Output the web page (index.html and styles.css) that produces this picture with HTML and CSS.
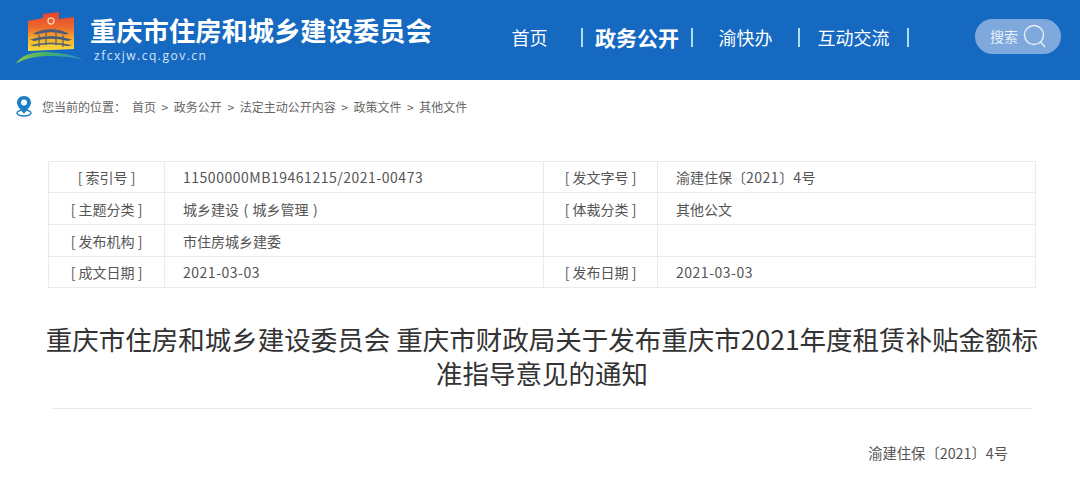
FILE: index.html
```html
<!DOCTYPE html>
<html lang="zh-CN">
<head>
  <meta charset="UTF-8">
  <meta name="viewport" content="width=device-width, initial-scale=1.0">
  <title>重庆市住房和城乡建设委员会</title>
  <link rel="stylesheet" href="styles.css">
</head>
<body>
  <!-- Header -->
  <header class="site-header">
    <svg class="logo" width="70" height="56" viewBox="16 9 70 56" aria-hidden="true">
      <defs>
        <linearGradient id="flag" x1="0" y1="0" x2="0" y2="1">
          <stop offset="0" stop-color="#e2442f"/>
          <stop offset="0.4" stop-color="#ee6a2c"/>
          <stop offset="0.72" stop-color="#f5b52e"/>
          <stop offset="1" stop-color="#f9dc3e"/>
        </linearGradient>
        <linearGradient id="swoosh" x1="0" y1="0" x2="1" y2="0">
          <stop offset="0" stop-color="#8ac743"/>
          <stop offset="0.45" stop-color="#45b06a"/>
          <stop offset="1" stop-color="#2f86cf"/>
        </linearGradient>
      </defs>
      <path d="M28 20 L43 17 L43 13 L59 11 L59 18 L74 16 L74 48 L28 50 Z" fill="url(#flag)"/>
      <circle cx="51" cy="20" r="3" fill="none" stroke="#f6c9a8" stroke-width="1.5"/>
      <path d="M33 32.500 Q51 24 69 32.500 L65 33.500 Q51 28.500 37 33.500 Z" fill="#4a5a78"/>
      <path d="M30 38.500 Q51 31.500 72 38.500 L68 40 Q51 35.500 34 40 Z" fill="#4a5a78"/>
      <path d="M30 44 Q51 39 72 44 L68 45.200 Q51 41.500 34 45.200 Z" fill="#5a6470"/>
      <path d="M39 34 V46 M46 31 V44 M56 31 V44 M63 34 V46" stroke="#55606f" stroke-width="1.200" fill="none"/>
      <path d="M16 62.500 Q24 50 48 51 Q70 52 84 59 Q66 54.500 46 55 Q28 55.500 16 62.500 Z" fill="url(#swoosh)"/>
    </svg>
    <div class="site-name">
      <div class="site-title">重庆市住房和城乡建设委员会</div>
      <div class="site-url">zfcxjw.cq.gov.cn</div>
    </div>
    <nav class="main-nav">
      <a class="nav-item nav-first"><span>首页</span></a>
      <a class="nav-item nav-active"><span>政务公开</span></a>
      <a class="nav-item nav-mid"><span>渝快办</span></a>
      <a class="nav-item nav-last"><span>互动交流</span></a>
    </nav>
    <div class="search-box">
      <span>搜索</span>
      <svg width="24" height="24" viewBox="0 0 24 24" fill="none" stroke="#e6f0fa" stroke-width="1.4" aria-hidden="true">
        <circle cx="11" cy="11" r="9.500"/>
        <path d="M17.500 18 L22 23"/>
      </svg>
    </div>
  </header>

  <!-- Breadcrumb -->
  <div class="breadcrumb">
    <svg width="18" height="22" viewBox="0 0 18 22" aria-hidden="true">
      <ellipse cx="9" cy="18" rx="7" ry="3" fill="none" stroke="#1e7fc4" stroke-width="1.500"/>
      <path d="M9 1 C4.500 1 2 4.300 2 7.600 C2 11.800 6.500 15.500 9 19 C11.500 15.500 16 11.800 16 7.600 C16 4.300 13.500 1 9 1 Z" fill="#1e7fc4"/>
      <circle cx="9" cy="7.500" r="3" fill="#fff"/>
    </svg>
    <span class="crumb-label">您当前的位置：</span>
    <span class="crumb-path">首页 &gt; 政务公开 &gt; 法定主动公开内容 &gt; 政策文件 &gt; 其他文件</span>
  </div>

  <!-- Document info -->
  <table class="info-table">
    <colgroup>
      <col class="col-label">
      <col class="col-value">
      <col class="col-label2">
      <col>
    </colgroup>
    <tr class="row-short">
      <th>[ 索引号 ]</th>
      <td><span class="num">11500000MB19461215/2021-00473</span></td>
      <th>[ 发文字号 ]</th>
      <td>渝建住保〔<span class="num">2021</span>〕<span class="num">4</span>号</td>
    </tr>
    <tr>
      <th>[ 主题分类 ]</th>
      <td class="wide-gaps">城乡建设 ( 城乡管理 )</td>
      <th>[ 体裁分类 ]</th>
      <td>其他公文</td>
    </tr>
    <tr>
      <th>[ 发布机构 ]</th>
      <td>市住房城乡建委</td>
      <th></th>
      <td></td>
    </tr>
    <tr class="row-short">
      <th>[ 成文日期 ]</th>
      <td><span class="num">2021-03-03</span></td>
      <th>[ 发布日期 ]</th>
      <td><span class="num">2021-03-03</span></td>
    </tr>
  </table>

  <!-- Article -->
  <h1 class="doc-title">重庆市住房和城乡建设委员会 重庆市财政局关于发布重庆市2021年度租赁补贴金额标准指导意见的通知</h1>
  <p class="doc-number">渝建住保〔2021〕4号</p>
</body>
</html>
```

FILE: styles.css
```css
body {
  font-family: "Noto Sans CJK SC", "Noto Sans", sans-serif;
  margin: 0;
  padding: 0;
  background-color: #fff;
  color: #555;
  overflow: hidden;
}
.site-header {
  height: 80px;
  background-color: #1569c1;
  display: flex;
  align-items: center;
  color: #fff;
}
.logo {
  margin: 0 4px 4px 16px;
  flex: none;
}
.site-name {
  width: 388px;
  margin-bottom: 2px;
}
.site-title {
  font-size: 26.3px;
  font-weight: 700;
  line-height: 30px;
}
.site-url {
  font-family: "Open Sans", sans-serif;
  font-size: 12px;
  line-height: 16px;
  letter-spacing: 1.5px;
  margin: 3px 0 0 4px;
  color: #d5e5f6;
}
.main-nav {
  display: flex;
  align-items: center;
  margin-bottom: 6px;
}
.nav-item {
  display: flex;
  align-items: center;
  justify-content: center;
  height: 19px;
  border-right: 2px solid #a8e0f0;
  font-size: 18px;
  box-sizing: border-box;
}
.nav-first { width: 105px; }
.nav-active { width: 110px; font-size: 21px; font-weight: 700; }
.nav-mid { width: 107px; }
.nav-last { width: 109px; }
.search-box {
  display: flex;
  align-items: center;
  gap: 5px;
  width: 86px;
  height: 35px;
  box-sizing: border-box;
  padding-left: 15px;
  margin: 0 0 8px 66px;
  border-radius: 18px;
  background-color: #7fa9dc;
  font-size: 14px;
  color: #e6f0fa;
}
.breadcrumb {
  display: flex;
  align-items: center;
  height: 22px;
  margin: 15px 0 0 15px;
  font-size: 12px;
  color: #666;
}
.breadcrumb svg {
  margin-right: 9px;
}
.crumb-label {
  width: 90px;
}
.crumb-path {
  word-spacing: 2.9px;
}
.info-table {
  width: 988px;
  margin: 44px 0 0 48px;
  border-collapse: collapse;
  table-layout: fixed;
  font-size: 14px;
}
.col-label { width: 116px; }
.col-value { width: 379px; }
.col-label2 { width: 114px; }
.info-table tr {
  height: 32px;
}
.info-table tr.row-short {
  height: 31px;
}
.info-table th,
.info-table td {
  padding: 0;
  border: 1px solid #ebebeb;
  font-weight: 400;
}
.info-table th {
  text-align: center;
}
.info-table td {
  padding-left: 18px;
}
.info-table td.wide-gaps {
  word-spacing: 1.3px;
}
.num {
  letter-spacing: 0.52px;
}
.doc-title {
  width: 1000px;
  margin: 34px 0 0 42px;
  padding-bottom: 17px;
  font-size: 26.5px;
  font-weight: 400;
  line-height: 34px;
  text-align: center;
  color: #333;
}
.doc-title::after {
  content: "";
  display: block;
  width: 981px;
  margin: 18px 0 0 10px;
  border-bottom: 1px solid #e8e8e8;
}
.doc-number {
  margin: 17px 72px 0 0;
  font-size: 14.3px;
  line-height: 20px;
  text-align: right;
}
```
